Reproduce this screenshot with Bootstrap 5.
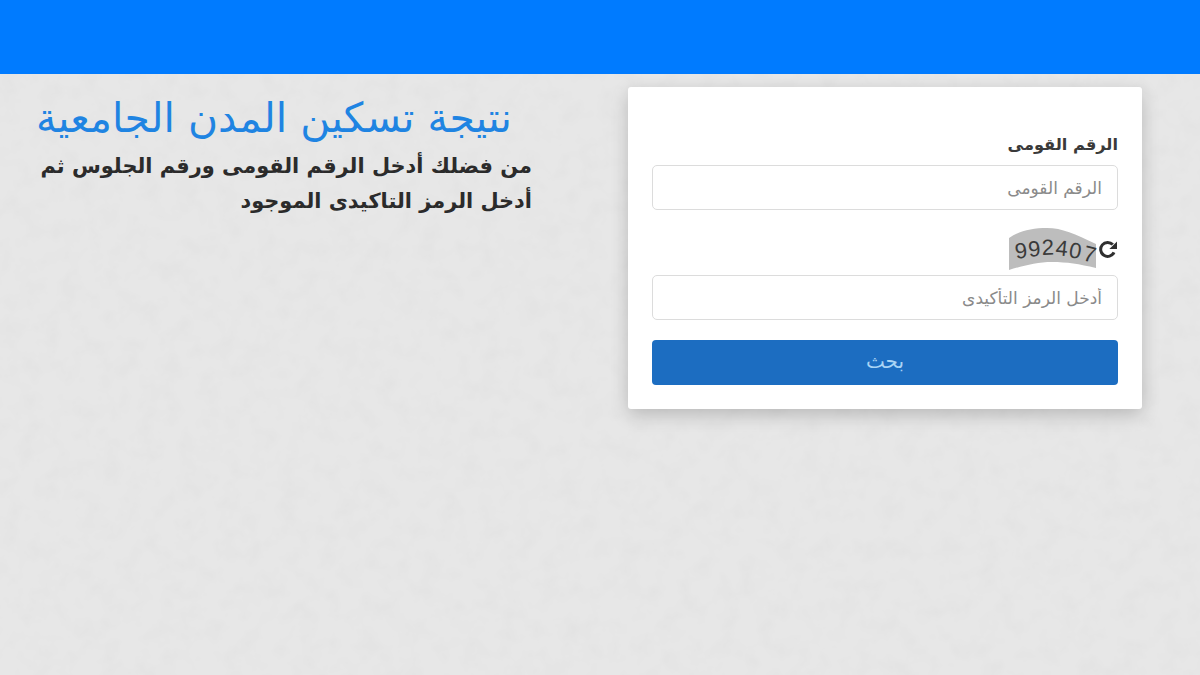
<!DOCTYPE html>
<html lang="ar" dir="rtl">
<head>
<meta charset="utf-8">
<title>نتيجة تسكين المدن الجامعية</title>
<link rel="stylesheet" href="https://cdn.jsdelivr.net/npm/bootstrap@5.3.0/dist/css/bootstrap.min.css">
<style>
html,body{height:100%}
body{background-color:#e7e7e7;background-image:url("data:image/svg+xml,%3Csvg xmlns='http://www.w3.org/2000/svg' width='1200' height='675'%3E%3Cfilter id='n'%3E%3CfeTurbulence type='fractalNoise' baseFrequency='.05' numOctaves='3'/%3E%3CfeColorMatrix values='0 0 0 0 0 0 0 0 0 0 0 0 0 0 0 .5 0 0 0 -.18'/%3E%3C/filter%3E%3Crect width='1200' height='675' filter='url(%23n)' opacity='.06'/%3E%3C/svg%3E");background-repeat:no-repeat;font-family:"DejaVu Sans","Liberation Sans",sans-serif;color:#212529;overflow:hidden}
.topbar{height:74px;background:#007bff}
.page-wrap{padding:13px 58px 0 0;gap:96px}
.login-box{width:514px;height:322px;padding:46px 24px 24px;border-radius:3px;background:#fff;box-shadow:0 6px 18px rgba(0,0,0,.2)}
.info-col{width:516px;padding-top:7px}
.info-title{font-size:41px;font-weight:400;line-height:48px;color:#1f84e2;margin:0 0 7px;text-align:center}
.info-text{font-size:20.9px;font-weight:700;line-height:35px;color:#2b2b2b;margin:0}
.field-label{font-size:16.2px;font-weight:700;line-height:24px;color:#3a3a3a;margin:0 0 8px;display:block}
.field-input{height:45px;font-size:17px;border:1px solid #dcdcdc;border-radius:5px;padding:0 15px}
.field-input::placeholder{color:#8a8a8a}
.captcha-row{height:65px;padding-top:18px;gap:1px}
.captcha-img{width:90px;height:44px;display:block;overflow:visible}
.captcha-digits{direction:ltr;unicode-bidi:isolate;font-family:"Liberation Sans",sans-serif;font-size:22px;fill:#3a3a3a}
.refresh{width:20px;height:20px;display:block;margin-top:11px}
.search-btn{height:45px;margin-top:20px;padding:0 0 4px;background:#1c6dc1;border:0;border-radius:4px;font-size:20px;line-height:1;color:#a9d4f5}
</style>
</head>
<body>
<div class="topbar"></div>
<main class="d-flex page-wrap">
  <form class="login-box">
    <label class="field-label" for="nid">الرقم القومى</label>
    <input id="nid" class="form-control field-input" type="text" placeholder="الرقم القومى">
    <div class="d-flex captcha-row">
      <svg class="refresh" viewBox="0 0 20 20" aria-hidden="true"><path d="M16 13.4A7 7 0 1 1 14.8 5.6" fill="none" stroke="#2f2f2f" stroke-width="3"/><path d="M19 2.4v7.6h-7.6z" fill="#2f2f2f"/></svg>
      <svg class="captcha-img" viewBox="0 0 90 44" role="img" aria-label="992407"><path d="M2 10C12 3 25 0 40 0c15 0 28 6 49 16v24C72 36 60 34 45 34c-15 0-30 4-43 8z" fill="#bdbdbd"/><text class="captcha-digits" x="9 22 35 48 61 75" y="31 29 27 27 29 32" rotate="-8 -6 -2 6 10 14">992407</text></svg>
    </div>
    <input class="form-control field-input" type="text" placeholder="أدخل الرمز التأكيدى">
    <button class="btn w-100 search-btn" type="button">بحث</button>
  </form>
  <section class="info-col">
    <h1 class="info-title">نتيجة تسكين المدن الجامعية</h1>
    <p class="info-text">من فضلك أدخل الرقم القومى ورقم الجلوس ثم أدخل الرمز التاكيدى الموجود</p>
  </section>
</main>
<script src="https://cdn.jsdelivr.net/npm/bootstrap@5.3.0/dist/js/bootstrap.bundle.min.js"></script>
</body>
</html>
